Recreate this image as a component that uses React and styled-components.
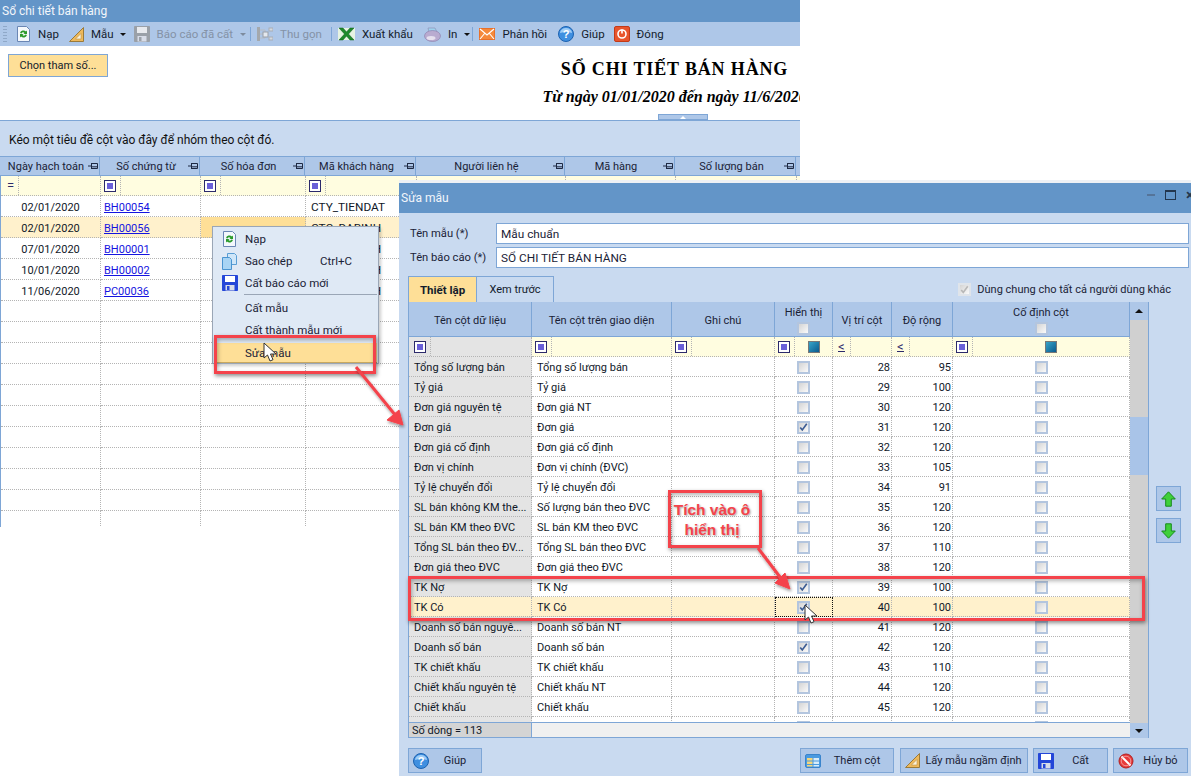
import React from "react"
import styled, { createGlobalStyle } from "styled-components"

const GlobalStyle = createGlobalStyle`
  html, body {
    margin: 0;
    padding: 0;
    background: #fff;
  }
  * {
    box-sizing: border-box;
  }
`

const blue = "#7ea6d6"
const barBlue = "#aec7e8"
const paleBlue = "#c9daf0"
const titleBlue = "#6395c8"
const dots = "#b4b4b4"
const red = "#f4434b"

/* icons */
const RefreshIcon = () => (
  <svg width="15" height="16" viewBox="0 0 15 16">
    <path d="M1.500.5h9l3 3v12h-12z" fill="#f4f8fc" stroke="#6a86b4" />
    <path d="M4 7a3.600 3.600 0 0 1 6-1.500l1-1v3.500H7.500l1-1A2 2 0 0 0 5.500 7.500z" fill="#2a9a2a" />
    <path d="M11 9a3.600 3.600 0 0 1-6 1.500l-1 1V8h3.500l-1 1a2 2 0 0 0 3 -.500z" fill="#2a9a2a" />
  </svg>
)

const RulerIcon = () => (
  <svg width="15" height="15" viewBox="0 0 15 15">
    <path d="M.5 14.500 14.500.5v14z" fill="#eeb95c" stroke="#9a7a3a" />
    <path d="M6.500 12 12 6.500V12z" fill="#fdf3da" stroke="#b8924a" strokeWidth=".6" />
  </svg>
)

const FloppyIcon = ({ color = "#2446d8", light = "#fff" }) => (
  <svg width="16" height="16" viewBox="0 0 16 16">
    <path d="M.5.5h15v15H.5z" fill={color} stroke={color} />
    <rect x="3" y="1" width="10" height="6" fill={light} />
    <rect x="3.500" y="10" width="9" height="5.500" fill="#d7dce8" />
    <rect x="5" y="11" width="2.500" height="4" fill={color} />
  </svg>
)

const ExcelIcon = () => (
  <svg width="17" height="14" viewBox="0 0 17 14">
    <rect x="0" y="1" width="17" height="12" fill="#e6f3e2" />
    <path d="M1 1h4l3.500 4L12 1h4l-5.500 6L16 13h-4L8.500 9 5 13H1l5.500-6z" fill="#1f8a2c" stroke="#0f5c1a" strokeWidth=".5" />
  </svg>
)

const TreeIcon = () => (
  <svg width="16" height="14" viewBox="0 0 16 14">
    <rect x="0" y="0" width="3" height="14" fill="#a4a8ac" />
    <path d="M3 3h5M3 7h5M3 11h5M8 3v8" stroke="#b8bcc2" fill="none" />
    <rect x="6" y="5" width="5" height="5" fill="#e4e8ee" stroke="#9aa0a8" />
    <rect x="12" y="1" width="4" height="3" fill="#d4d8de" stroke="#a8aeb6" />
    <rect x="12" y="10" width="4" height="3" fill="#d4d8de" stroke="#a8aeb6" />
  </svg>
)

const PrinterIcon = () => (
  <svg width="17" height="15" viewBox="0 0 17 15">
    <path d="M4 1h7l2 4H5z" fill="#9fd2ee" stroke="#8a8ab0" strokeWidth=".6" />
    <ellipse cx="8.500" cy="9" rx="8" ry="5.500" fill="#b9abd0" stroke="#8a7caa" strokeWidth=".6" />
    <ellipse cx="7" cy="11" rx="4.500" ry="2" fill="#e6e0ee" />
  </svg>
)

const MailIcon = () => (
  <svg width="16" height="12" viewBox="0 0 16 12">
    <rect x=".5" y=".5" width="15" height="11" fill="#f58a3c" stroke="#e8702a" />
    <path d="M1 1l7 6 7-6M1 11l5-6M15 11l-5-6" stroke="#fff" fill="none" strokeWidth="1.100" />
  </svg>
)

const HelpIcon = ({ size = 16 }) => (
  <svg width={size} height={size} viewBox="0 0 16 16">
    <circle cx="8" cy="8" r="7.500" fill="#3f8fe0" stroke="#1c62b0" />
    <path d="M2 7a6 5 0 0 1 12 0c-3-1.500-8-1.500-12 0z" fill="#9fcdf6" />
    <text x="8" y="12" fontSize="11" fontWeight="700" fontFamily="Liberation Sans, sans-serif" fill="#fff" textAnchor="middle">?</text>
  </svg>
)

const PowerIcon = () => (
  <svg width="16" height="16" viewBox="0 0 16 16">
    <rect x=".5" y=".5" width="15" height="15" rx="1.500" fill="#e8542c" stroke="#c23a18" />
    <circle cx="8" cy="8" r="4" fill="none" stroke="#fff" strokeWidth="1.600" />
    <path d="M8 3.500v4" stroke="#fff" strokeWidth="1.600" />
  </svg>
)

const CopyIcon = () => (
  <svg width="15" height="17" viewBox="0 0 15 17">
    <path d="M5.500.5h7l2 2v9h-9z" fill="#cfe6f8" stroke="#5a9ed4" />
    <path d="M.5 4.500h7l2 2v10h-9z" fill="#a8d4f4" stroke="#4a94d0" />
  </svg>
)

const StopIcon = () => (
  <svg width="16" height="16" viewBox="0 0 16 16">
    <circle cx="8" cy="8" r="7" fill="#e83a3a" stroke="#b02020" />
    <path d="M3.500 3.500l9 9" stroke="#fff" strokeWidth="2" />
    <circle cx="8" cy="8" r="4.800" fill="none" stroke="#f4b0b0" strokeWidth=".8" />
  </svg>
)

const TableIcon = () => (
  <svg width="16" height="14" viewBox="0 0 16 14">
    <rect x=".5" y=".5" width="15" height="13" rx="1.500" fill="#4a9ae0" stroke="#3a84cc" />
    <rect x="2" y="4" width="5.500" height="2.500" fill="#f6d67a" />
    <rect x="2" y="7.500" width="5.500" height="2.500" fill="#f6d67a" />
    <rect x="2" y="11" width="5.500" height="1.500" fill="#f6d67a" />
    <rect x="8.500" y="4" width="5.500" height="2.500" fill="#d8ecfa" />
    <rect x="8.500" y="7.500" width="5.500" height="2.500" fill="#d8ecfa" />
    <rect x="8.500" y="11" width="5.500" height="1.500" fill="#d8ecfa" />
  </svg>
)

const GreenArrow = ({ down }) => (
  <svg width="15" height="16" viewBox="0 0 15 16" style={down ? { transform: "scaleY(-1)" } : undefined}>
    <path d="M7.500.8 14.300 8h-4v7.200H4.700V8H.7z" fill="#3fd03a" stroke="#178a1c" strokeLinejoin="round" />
  </svg>
)

const PinIcon = () => (
  <svg width="10" height="8" viewBox="0 0 10 8">
    <path d="M0 4h3M3.500 1v6M3.500 1.500h6v5h-6M3.500 4.800h6" fill="none" stroke="#1e2a44" />
  </svg>
)

const CursorIcon = () => (
  <svg width="14" height="21" viewBox="0 0 14 21">
    <path d="M1 1v15l3.500-3 2.500 6 3-1.300-2.500-5.700H13z" fill="#fff" stroke="#333" strokeLinejoin="round" />
  </svg>
)

const CheckGlyph = () => (
  <svg width="11" height="10" viewBox="0 0 11 10">
    <path d="M1.500 5.500 4 8.500 9.500 1" fill="none" stroke="#3c5c94" strokeWidth="2" />
  </svg>
)

/* page */
const Page = styled.div`
  position: relative;
  width: 1191px;
  height: 776px;
  overflow: hidden;
  background: #fff;
  font-family: Roboto, "Liberation Sans", sans-serif;
  font-size: 11.5px;
  color: #101828;
`

const ReportWindow = styled.section`
  width: 800px;
  height: 527px;
  overflow: hidden;
`

const TitleBar = styled.header`
  display: flex;
  align-items: center;
  justify-content: space-between;
  height: ${(p) => p.$height}px;
  padding-left: 2px;
  background: ${titleBlue};
  color: #f2f6fb;
  font-size: 12px;
`

const Toolbar = styled.div`
  display: flex;
  align-items: center;
  height: 24px;
  padding-left: 3px;
  background: ${barBlue};
`

const Grip = styled.span`
  width: 4px;
  height: 16px;
  margin-right: 9px;
  background: repeating-linear-gradient(#8fa8c8 0 1px, transparent 1px 3px);
`

const ToolButton = styled.span`
  display: flex;
  align-items: center;
  gap: 7px;
  margin-right: ${(p) => p.$gap ?? 9}px;
  color: ${(p) => (p.$disabled ? "#8492a6" : "#141c2c")};
  white-space: nowrap;
`

const Caret = styled.span`
  width: 0;
  height: 0;
  margin-right: ${(p) => p.$gap ?? 6}px;
  border-left: 3px solid transparent;
  border-right: 3px solid transparent;
  border-top: 3px solid ${(p) => (p.$disabled ? "#7d8b9e" : "#111")};
`

const ToolSep = styled.span`
  width: 1px;
  height: 14px;
  margin: 0 6px 0 0;
  background: ${blue};
`

const ParamArea = styled.div`
  position: relative;
  display: grid;
  grid-template-columns: 549px 251px;
  height: 74px;
  padding-top: 8px;
  overflow: hidden;
`

const ParamButton = styled.button`
  width: 100px;
  height: 23px;
  margin-left: 8px;
  padding: 0;
  background: #fedf97;
  border: 1px solid ${blue};
  color: #141c2c;
  font: inherit;
  font-size: 11px;
`

const Heading = styled.div`
  display: flex;
  flex-direction: column;
  align-items: center;
  color: #000;
  font-family: "Liberation Serif", "Times New Roman", serif;
  font-weight: 700;
  white-space: nowrap;
`

const ReportTitle = styled.div`
  margin-top: 5px;
  font-size: 18px;
  letter-spacing: 0.85px;
  line-height: 21px;
`

const ReportRange = styled.div`
  margin-top: 8px;
  font-size: 16px;
  font-style: italic;
  line-height: 18px;
`

const SplitHandle = styled.span`
  position: absolute;
  left: 658px;
  bottom: 0;
  display: flex;
  justify-content: center;
  width: 50px;
  height: 6px;
  padding-top: 1px;
  background: ${barBlue};
  border: 1px solid ${blue};

  &::after {
    content: "";
    border-left: 3px solid transparent;
    border-right: 3px solid transparent;
    border-bottom: 3px solid #fff;
  }
`

const GroupPanel = styled.div`
  display: flex;
  align-items: center;
  height: 36px;
  padding: 3px 0 0 9px;
  background: ${paleBlue};
  border-top: 1px solid ${blue};
  color: #111;
  font-size: 12px;
`

const ReportHeader = styled.div`
  display: grid;
  grid-template-columns: 100px 100px 105px 111px 149px 110px 121px 4px;
  height: 20px;
  background: ${barBlue};
  border-top: 1px solid ${blue};
  border-bottom: 1px solid ${blue};
  font-size: 11px;
`

const ReportHeadCell = styled.div`
  display: flex;
  align-items: center;
  padding: 0 1px 0 4px;
  border-right: 1px solid ${blue};
  color: #1a2236;
  white-space: nowrap;

  & > span {
    flex: 1;
    text-align: center;
  }
`

const ReportRow = styled.div`
  display: grid;
  grid-template-columns: 100px 100px 105px 111px 149px 110px 121px 4px;
  height: ${(p) => p.$height ?? 21}px;
  background: ${(p) => (p.$filter ? "#fffde0" : p.$active ? "#fff1cc" : "#fff")};
  border-left: 1px solid ${blue};
  font-size: 11px;
`

const ReportCell = styled.div`
  display: flex;
  align-items: center;
  justify-content: ${(p) => (p.$center ? "center" : "flex-start")};
  padding-left: ${(p) => (p.$center ? 0 : p.$pad ?? 3)}px;
  padding-top: ${(p) => (p.$flat ? 0 : 2)}px;
  background: ${(p) => (p.$focus ? "#fedf97" : "transparent")};
  border-right: 1px dotted ${dots};
  border-bottom: 1px dotted ${dots};
  white-space: nowrap;
  overflow: hidden;
`

const DocLink = styled.a`
  color: #1414e0;
  text-decoration: underline;
`

const CustomerCode = styled.span`
  font-size: 11.800px;
`

/* filter bits */
const FilterMark = styled.span`
  display: inline-flex;
  flex: none;
  align-items: center;
  justify-content: center;
  width: 12px;
  height: 12px;
  background: #fff;
  border: 1px solid ${(p) => (p.$teal ? "#777" : "#2c2a6b")};

  &::after {
    content: "";
    width: ${(p) => (p.$teal ? 10 : 6)}px;
    height: ${(p) => (p.$teal ? 10 : 6)}px;
    background: ${(p) => (p.$teal ? "linear-gradient(135deg,#38a4c8,#0a5a8e)" : "#6a60d8")};
  }
`

const FilterSlot = styled.span`
  display: flex;
  flex: none;
  align-items: center;
  width: ${(p) => p.$width ?? 18}px;
  height: 100%;
  padding-left: ${(p) => p.$pad ?? 0}px;
  border-right: 1px dotted ${dots};
  color: #2c2a6b;
  font-size: 13px;
`

const Op = styled.span`
  display: block;
  border-bottom: 1px solid #2c2a6b;
  line-height: 9px;
`

/* context menu */
const ContextMenu = styled.div`
  position: absolute;
  left: 212px;
  top: 226px;
  width: 167px;
  height: 138px;
  padding: 1px;
  background: #dfe9f5;
  border: 1px solid #9aa6b6;
  box-shadow: 2px 2px 3px rgba(0, 0, 0, 0.2);
  color: #1a2236;
`

const MenuItem = styled.div`
  display: flex;
  align-items: center;
  height: ${(p) => (p.$active ? 20 : 22)}px;
  margin-top: ${(p) => (p.$active ? 2 : 0)}px;
  background: ${(p) => (p.$active ? "#fedf97" : "transparent")};
  border-bottom: ${(p) => (p.$active ? "1px solid #c8a860" : "0")};
`

const MenuIcon = styled.span`
  display: flex;
  justify-content: center;
  flex: none;
  width: 31px;
`

const MenuLabel = styled.span`
  width: 75px;
  white-space: nowrap;
`

const MenuSep = styled.div`
  height: 1px;
  margin: 0 0 2px 30px;
  background: #9aa6b6;
`

/* dialog */
const Dialog = styled.section`
  position: absolute;
  left: 399px;
  top: 183px;
  display: flex;
  flex-direction: column;
  width: 800px;
  height: 593px;
  background: ${paleBlue};
  box-shadow: 0 -3px 0 #eef1f5;
`

const WindowControls = styled.span`
  display: flex;
  align-items: center;
  gap: 10px;
  margin-top: -6px;
  padding-right: 5px;
  color: #23364e;
`

const MinButton = styled.span`
  width: 8px;
  height: 2px;
  background: #557499;
`

const MaxButton = styled.span`
  width: 11px;
  height: 10px;
  border: 1px solid #23364e;
  border-top-width: 2px;
`

const CloseButton = styled.span`
  font-size: 15px;
  font-weight: 700;
  line-height: 10px;
`

const FieldRow = styled.label`
  display: grid;
  grid-template-columns: 86px 693px;
  align-items: center;
  height: 21px;
  margin: ${(p) => p.$top}px 0 0 11px;
  color: #1a2236;
  font-size: 11.200px;
`

const TextBox = styled.span`
  display: flex;
  align-items: center;
  height: 21px;
  padding-left: 4px;
  background: #fff;
  border: 1px solid ${blue};
  font-size: 11.800px;
`

const TabRow = styled.div`
  display: flex;
  align-items: flex-end;
  height: 26px;
  margin-top: 8px;
  padding: 0 28px 0 9px;
  font-size: 11px;
`

const Tab = styled.span`
  display: flex;
  align-items: center;
  justify-content: center;
  width: ${(p) => p.$width}px;
  height: 26px;
  background: ${(p) => (p.$active ? "#fedf97" : paleBlue)};
  border: 1px solid ${blue};
  border-left-width: ${(p) => (p.$active ? 1 : 0)}px;
  border-bottom: 0;
  font-size: ${(p) => (p.$active ? "11.500px" : "11px")};
  font-weight: ${(p) => (p.$active ? 700 : 400)};
  color: #141c2c;
`

const ShareOption = styled.span`
  display: flex;
  align-items: center;
  gap: 6px;
  height: 100%;
  margin-left: auto;
  color: #1a2236;
`

const TableArea = styled.div`
  display: flex;
  height: 436px;
  margin-left: 9px;
`

const Table = styled.div`
  display: flex;
  flex-direction: column;
  width: 722px;
  border-left: 1px solid ${blue};
  border-bottom: 1px solid ${blue};
  background: #fff;
  font-size: 11px;
  overflow: hidden;
`

const columns = "123px 140px 103px 58px 59px 61px 177px"

const TableHeader = styled.div`
  display: grid;
  flex: none;
  grid-template-columns: ${columns};
  height: 35px;
  background: ${barBlue};
  border-bottom: 1px solid ${blue};
`

const TableHead = styled.div`
  display: flex;
  flex-direction: column;
  align-items: center;
  justify-content: center;
  gap: 3px;
  padding-top: 2px;
  border-right: 1px solid ${blue};
  color: #1a2236;
`

const FilterRow = styled.div`
  display: grid;
  flex: none;
  grid-template-columns: ${columns};
  height: 20px;
  background: #fffde0;
`

const FilterCell = styled.div`
  display: flex;
  align-items: center;
  padding-left: ${(p) => p.$pad ?? 0}px;
  background: ${(p) => (p.$grey ? "#e4e4e4" : "transparent")};
  border-right: 1px dotted ${dots};
  border-bottom: 1px dotted ${dots};
`

const TealSlot = styled.span`
  display: flex;
  flex: 1;
  justify-content: center;
`

const Rows = styled.div`
  flex: 1;
  overflow: hidden;
`

const Row = styled.div`
  display: grid;
  grid-template-columns: ${columns};
  height: 20px;
  background: ${(p) => (p.$active ? "#fff1cc" : "#fff")};
`

const Cell = styled.div`
  display: flex;
  align-items: center;
  justify-content: ${(p) => (p.$align === "center" ? "center" : p.$align === "right" ? "flex-end" : "flex-start")};
  padding: ${(p) => (p.$align === "right" ? "2px 1px 0 0" : p.$align === "center" ? "1px 0 0" : "2px 0 0 5px")};
  background: ${(p) => (p.$grey ? (p.$active ? "#fff1cc" : "#e4e4e4") : "transparent")};
  border-right: 1px dotted ${dots};
  border-bottom: 1px dotted ${dots};
  outline: ${(p) => (p.$focus ? "1px dotted #111" : "none")};
  outline-offset: -1px;
  white-space: nowrap;
  overflow: hidden;
`

const CheckBox = styled.span`
  display: inline-flex;
  align-items: center;
  justify-content: center;
  width: 13px;
  height: 13px;
  background: linear-gradient(135deg, #d4d4d4, #fafafa);
  border: 2px solid ${(p) => (p.$muted ? "#dfe4ea" : "#b3c5de")};
`

const TableFooter = styled.div`
  display: grid;
  flex: none;
  grid-template-columns: 123px 1fr;
  height: 15px;
  background: #f0f0f0;
  border-top: 1px solid ${blue};
`

const RowCount = styled.div`
  display: flex;
  align-items: center;
  padding: 1px 0 0 3px;
  background: #d4d4d4;
  border-right: 1px solid ${blue};
`

const ScrollBar = styled.div`
  display: flex;
  flex: none;
  flex-direction: column;
  width: 18px;
  background: #d0d0d0;
`

const ScrollButton = styled.div`
  display: flex;
  align-items: center;
  justify-content: center;
  height: ${(p) => p.$height}px;
  background: ${barBlue};

  &::after {
    content: "";
    border-left: 4px solid transparent;
    border-right: 4px solid transparent;
    border-${(p) => (p.$down ? "top" : "bottom")}: 4px solid #111;
  }
`

const ScrollGap = styled.div`
  flex: ${(p) => (p.$fill ? 1 : "none")};
  height: ${(p) => p.$height ?? 0}px;
  background: ${(p) => (p.$thumb ? "#a9c4e8" : "transparent")};
`

const SidePanel = styled.div`
  display: flex;
  flex: 1;
  flex-direction: column;
  gap: 7px;
  padding: 184px 0 0 7px;
  border-left: 1px solid ${blue};
`

const MoveButton = styled.span`
  display: flex;
  align-items: center;
  justify-content: center;
  width: 25px;
  height: 25px;
  background: ${barBlue};
  border: 1px solid ${blue};
`

const ActionBar = styled.footer`
  display: flex;
  gap: 5px;
  margin-top: 10px;
  padding: 0 11px 0 9px;
`

const ActionButton = styled.button`
  display: flex;
  align-items: center;
  width: ${(p) => p.$width}px;
  height: 25px;
  margin-right: ${(p) => p.$after ?? 0}px;
  padding: 0 0 0 4px;
  background: ${barBlue};
  border: 1px solid ${blue};
  color: #1a2236;
  font: inherit;
  font-size: 11px;

  & > span {
    flex: 1;
    text-align: center;
    white-space: nowrap;
  }
`

/* annotations */
const RedFrame = styled.div`
  position: absolute;
  left: ${(p) => p.$x}px;
  top: ${(p) => p.$y}px;
  width: ${(p) => p.$w}px;
  height: ${(p) => p.$h}px;
  border: 3px solid ${red};
  box-shadow: 1px 2px 4px rgba(0, 0, 0, 0.45), inset 1px 2px 4px rgba(0, 0, 0, 0.3);
  pointer-events: none;
`

const NoteFrame = styled(RedFrame)`
  display: flex;
  align-items: center;
  justify-content: center;
  padding: 2px 6px 0 0;
  color: ${red};
  font-family: "Liberation Sans", sans-serif;
  font-size: 15.500px;
  font-weight: 700;
  line-height: 20px;
  text-align: center;
  text-shadow: 1px 1px 2px rgba(0, 0, 0, 0.35);
`

const ArrowLayer = styled.svg`
  position: absolute;
  left: 0;
  top: 0;
  pointer-events: none;
`

const Cursor = styled.span`
  position: absolute;
  left: ${(p) => p.$x}px;
  top: ${(p) => p.$y}px;
  line-height: 0;
`

const reportHeads = ["Ngày hạch toán", "Số chứng từ", "Số hóa đơn", "Mã khách hàng", "Người liên hệ", "Mã hàng", "Số lượng bán"]

const emptyRow = ["", "", ""]

const reportRows = [
  ["02/01/2020", "BH00054", "CTY_TIENDAT"],
  ["02/01/2020", "BH00056", "CTC_DABINH"],
  ["07/01/2020", "BH00001", "CTC_DABINH"],
  ["10/01/2020", "BH00002", "CTC_DABINH"],
  ["11/06/2020", "PC00036", "CTC_DABINH"],
  ...Array.from({ length: 11 }, () => emptyRow),
]

const fieldRows = [
  ["Tổng số lượng bán", "Tổng số lượng bán", 0, 28, 95],
  ["Tỷ giá", "Tỷ giá", 0, 29, 100],
  ["Đơn giá nguyên tệ", "Đơn giá NT", 0, 30, 120],
  ["Đơn giá", "Đơn giá", 1, 31, 120],
  ["Đơn giá cố định", "Đơn giá cố định", 0, 32, 120],
  ["Đơn vị chính", "Đơn vị chính (ĐVC)", 0, 33, 105],
  ["Tỷ lệ chuyển đổi", "Tỷ lệ chuyển đổi", 0, 34, 91],
  ["SL bán không KM the...", "Số lượng bán theo ĐVC", 0, 35, 120],
  ["SL bán KM theo ĐVC", "SL bán KM theo ĐVC", 0, 36, 120],
  ["Tổng SL bán theo ĐV...", "Tổng SL bán theo ĐVC", 0, 37, 110],
  ["Đơn giá theo ĐVC", "Đơn giá theo ĐVC", 0, 38, 120],
  ["TK Nợ", "TK Nợ", 1, 39, 100],
  ["TK Có", "TK Có", 1, 40, 100],
  ["Doanh số bán nguyê...", "Doanh số bán NT", 0, 41, 120],
  ["Doanh số bán", "Doanh số bán", 1, 42, 120],
  ["TK chiết khấu", "TK chiết khấu", 0, 43, 110],
  ["Chiết khấu nguyên tệ", "Chiết khấu NT", 0, 44, 120],
  ["Chiết khấu", "Chiết khấu", 0, 45, 120],
  ["", "", 0, "", ""],
]

const App = () => (
  <Page>
    <GlobalStyle />
    <ReportWindow>
      <TitleBar $height={22}>Sổ chi tiết bán hàng</TitleBar>
      <Toolbar>
        <Grip />
        <ToolButton $gap={10}>
          <RefreshIcon />
          Nạp
        </ToolButton>
        <ToolButton $gap={6}>
          <RulerIcon />
          Mẫu
        </ToolButton>
        <Caret $gap={8} />
        <ToolButton $disabled $gap={7}>
          <FloppyIcon color="#9aa0a8" light="#e8eaee" />
          Báo cáo đã cất
        </ToolButton>
        <Caret $disabled $gap={4} />
        <ToolSep />
        <ToolButton $disabled $gap={9}>
          <TreeIcon />
          Thu gọn
        </ToolButton>
        <ToolSep />
        <ToolButton $gap={11}>
          <ExcelIcon />
          Xuất khẩu
        </ToolButton>
        <ToolButton $gap={7}>
          <PrinterIcon />
          In
        </ToolButton>
        <Caret $gap={2} />
        <ToolSep />
        <ToolButton $gap={11}>
          <MailIcon />
          Phản hồi
        </ToolButton>
        <ToolButton>
          <HelpIcon />
          Giúp
        </ToolButton>
        <ToolButton>
          <PowerIcon />
          Đóng
        </ToolButton>
      </Toolbar>
      <ParamArea>
        <div>
          <ParamButton>Chọn tham số...</ParamButton>
        </div>
        <Heading>
          <ReportTitle>SỔ CHI TIẾT BÁN HÀNG</ReportTitle>
          <ReportRange>Từ ngày 01/01/2020 đến ngày 11/6/2020</ReportRange>
        </Heading>
        <SplitHandle />
      </ParamArea>
      <GroupPanel>Kéo một tiêu đề cột vào đây để nhóm theo cột đó.</GroupPanel>
      <ReportHeader>
        {reportHeads.map((head) => (
          <ReportHeadCell key={head}>
            <span>{head}</span>
            <PinIcon />
          </ReportHeadCell>
        ))}
      </ReportHeader>
      <ReportRow $filter $height={20}>
        <ReportCell $pad={0} $flat>
          <FilterSlot $pad={6}>=</FilterSlot>
        </ReportCell>
        {[0, 1, 2].map((n) => (
          <ReportCell key={n} $pad={3} $flat>
            <FilterMark />
            <FilterSlot $width={5} />
          </ReportCell>
        ))}
        <ReportCell />
        <ReportCell />
        <ReportCell />
      </ReportRow>
      {reportRows.map(([date, doc, customer], i) => (
        <ReportRow key={i} $active={i === 1}>
          <ReportCell $center>{date}</ReportCell>
          <ReportCell>{doc && <DocLink>{doc}</DocLink>}</ReportCell>
          <ReportCell $focus={i === 1} />
          <ReportCell $pad={5}>
            <CustomerCode>{customer}</CustomerCode>
          </ReportCell>
          <ReportCell />
          <ReportCell />
          <ReportCell />
        </ReportRow>
      ))}
    </ReportWindow>

    <ContextMenu>
      <MenuItem>
        <MenuIcon>
          <RefreshIcon />
        </MenuIcon>
        <MenuLabel>Nạp</MenuLabel>
      </MenuItem>
      <MenuItem>
        <MenuIcon>
          <CopyIcon />
        </MenuIcon>
        <MenuLabel>Sao chép</MenuLabel>
        Ctrl+C
      </MenuItem>
      <MenuItem>
        <MenuIcon>
          <FloppyIcon />
        </MenuIcon>
        <MenuLabel>Cất báo cáo mới</MenuLabel>
      </MenuItem>
      <MenuSep />
      <MenuItem>
        <MenuIcon />
        <MenuLabel>Cất mẫu</MenuLabel>
      </MenuItem>
      <MenuItem>
        <MenuIcon />
        <MenuLabel>Cất thành mẫu mới</MenuLabel>
      </MenuItem>
      <MenuItem $active>
        <MenuIcon />
        <MenuLabel>Sửa mẫu</MenuLabel>
      </MenuItem>
    </ContextMenu>

    <Dialog>
      <TitleBar $height={30}>
        Sửa mẫu
        <WindowControls>
          <MinButton />
          <MaxButton />
          <CloseButton>×</CloseButton>
        </WindowControls>
      </TitleBar>
      <FieldRow $top={10}>
        Tên mẫu (*)
        <TextBox>Mẫu chuẩn</TextBox>
      </FieldRow>
      <FieldRow $top={3}>
        Tên báo cáo (*)
        <TextBox>SỔ CHI TIẾT BÁN HÀNG</TextBox>
      </FieldRow>
      <TabRow>
        <Tab $active $width={69}>
          Thiết lập
        </Tab>
        <Tab $width={77}>Xem trước</Tab>
        <ShareOption>
          <CheckBox $muted>
            <svg width="9" height="9" viewBox="0 0 11 10">
              <path d="M1.500 5.500 4 8.500 9.500 1" fill="none" stroke="#b8b8b8" strokeWidth="2" />
            </svg>
          </CheckBox>
          Dùng chung cho tất cả người dùng khác
        </ShareOption>
      </TabRow>
      <TableArea>
        <Table>
          <TableHeader>
            <TableHead>Tên cột dữ liệu</TableHead>
            <TableHead>Tên cột trên giao diện</TableHead>
            <TableHead>Ghi chú</TableHead>
            <TableHead>
              Hiển thị
              <CheckBox />
            </TableHead>
            <TableHead>Vị trí cột</TableHead>
            <TableHead>Độ rộng</TableHead>
            <TableHead>
              Cố định cột
              <CheckBox />
            </TableHead>
          </TableHeader>
          <FilterRow>
            <FilterCell $grey $pad={5}>
              <FilterMark />
              <FilterSlot $width={5} />
            </FilterCell>
            <FilterCell $pad={3}>
              <FilterMark />
              <FilterSlot $width={5} />
            </FilterCell>
            <FilterCell $pad={3}>
              <FilterMark />
              <FilterSlot $width={5} />
            </FilterCell>
            <FilterCell $pad={3}>
              <FilterMark />
              <FilterSlot $width={5} />
              <TealSlot>
                <FilterMark $teal />
              </TealSlot>
            </FilterCell>
            <FilterCell>
              <FilterSlot $pad={5}>
                <Op>&lt;</Op>
              </FilterSlot>
            </FilterCell>
            <FilterCell>
              <FilterSlot $pad={5}>
                <Op>&lt;</Op>
              </FilterSlot>
            </FilterCell>
            <FilterCell $pad={3}>
              <FilterMark />
              <FilterSlot $width={5} />
              <TealSlot>
                <FilterMark $teal />
              </TealSlot>
            </FilterCell>
          </FilterRow>
          <Rows>
            {fieldRows.map(([source, label, shown, position, width], i) => {
              const active = position === 40
              return (
                <Row key={i} $active={active}>
                  <Cell $grey $active={active}>
                    {source}
                  </Cell>
                  <Cell>{label}</Cell>
                  <Cell />
                  <Cell $align="center" $focus={active}>
                    <CheckBox>{shown ? <CheckGlyph /> : null}</CheckBox>
                  </Cell>
                  <Cell $align="right">{position}</Cell>
                  <Cell $align="right">{width}</Cell>
                  <Cell $align="center">
                    <CheckBox />
                  </Cell>
                </Row>
              )
            })}
          </Rows>
          <TableFooter>
            <RowCount>Số dòng = 113</RowCount>
          </TableFooter>
        </Table>
        <ScrollBar>
          <ScrollButton $height={18} />
          <ScrollGap $height={97} />
          <ScrollGap $height={58} $thumb />
          <ScrollGap $fill />
          <ScrollButton $height={15} $down />
        </ScrollBar>
        <SidePanel>
          <MoveButton>
            <GreenArrow />
          </MoveButton>
          <MoveButton>
            <GreenArrow down />
          </MoveButton>
        </SidePanel>
      </TableArea>
      <ActionBar>
        <ActionButton $width={74} $after={313}>
          <HelpIcon />
          <span>Giúp</span>
        </ActionButton>
        <ActionButton $width={94} $after={1}>
          <TableIcon />
          <span>Thêm cột</span>
        </ActionButton>
        <ActionButton $width={128}>
          <RulerIcon />
          <span>Lấy mẫu ngầm định</span>
        </ActionButton>
        <ActionButton $width={75}>
          <FloppyIcon />
          <span>Cất</span>
        </ActionButton>
        <ActionButton $width={75}>
          <StopIcon />
          <span>Hủy bỏ</span>
        </ActionButton>
      </ActionBar>
    </Dialog>

    <RedFrame $x={214} $y={335} $w={162} $h={39} />
    <RedFrame $x={408} $y={576} $w={737} $h={45} />
    <NoteFrame $x={668} $y={490} $w={94} $h={58}>
      Tích vào ô
      <br />
      hiển thị
    </NoteFrame>
    <ArrowLayer width="1191" height="776" viewBox="0 0 1191 776">
      <defs>
        <filter id="arrowShadow" x="-30%" y="-30%" width="160%" height="160%">
          <feDropShadow dx="1" dy="2" stdDeviation="1.500" floodColor="#000" floodOpacity=".4" />
        </filter>
      </defs>
      <g filter="url(#arrowShadow)" fill={red} stroke={red}>
        <path d="M356 367 396 416" strokeWidth="3" />
        <path d="M403 425 399 410 387 420z" />
        <path d="M758 548 783 581" strokeWidth="3" />
        <path d="M790 589 785 573 775 583z" />
      </g>
    </ArrowLayer>
    <Cursor $x={263} $y={342}>
      <CursorIcon />
    </Cursor>
    <Cursor $x={804} $y={604}>
      <CursorIcon />
    </Cursor>
  </Page>
)

export default App
